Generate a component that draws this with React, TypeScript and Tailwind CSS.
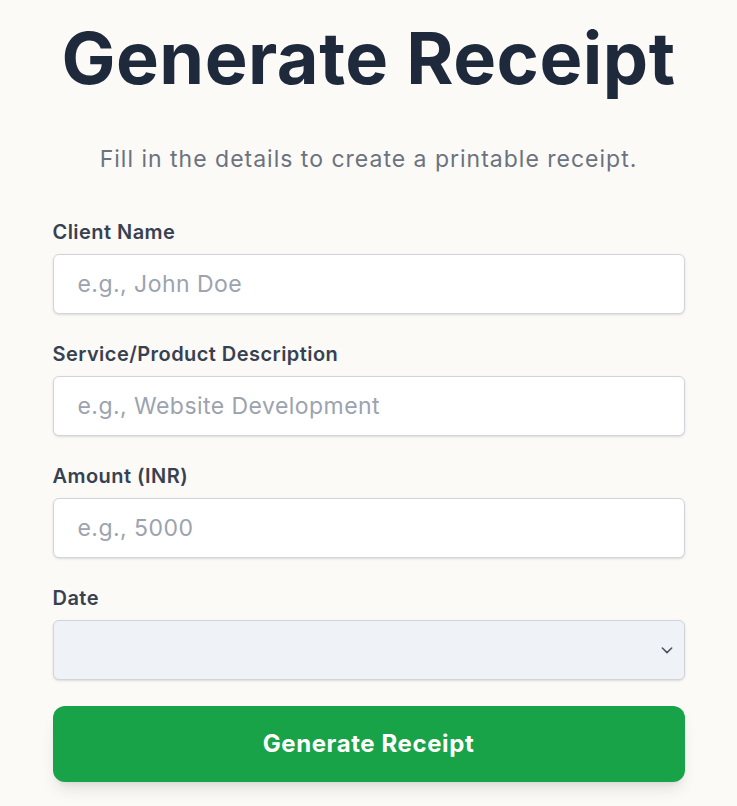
export default function App() {
  const fields = [
    { label: "Client Name", placeholder: "e.g., John Doe" },
    { label: "Service/Product Description", placeholder: "e.g., Website Development" },
    { label: "Amount (INR)", placeholder: "e.g., 5000" },
  ];

  return (
    <div className="min-h-[806px] w-full bg-[#fcfaf7] font-['Inter',sans-serif]">
      <div className="mx-auto w-[632px] pt-[14px]">
        <h1 className="text-center text-[72px] font-bold leading-[88px] tracking-[0.5px] text-[#1e293b]">
          Generate Receipt
        </h1>
        <p className="mt-[42px] text-center text-[23px] leading-[30px] tracking-[1px] text-[#6b7280]">
          Fill in the details to create a printable receipt.
        </p>

        <form className="mt-[46px] flex flex-col gap-[28px]">
          {fields.map((f) => (
            <div key={f.label}>
              <label className="mb-[10px] block text-[20px] font-semibold leading-6 tracking-[0.45px] text-[#374151]">
                {f.label}
              </label>
              <input
                type="text"
                placeholder={f.placeholder}
                className="h-[60px] w-full rounded-md border border-[#d1d5db] bg-white px-6 text-[23px] tracking-[0.45px] text-[#111827] shadow-sm outline-none placeholder:text-[#9ca3af]"
              />
            </div>
          ))}

          <div>
            <label className="mb-[10px] block text-[20px] font-semibold leading-6 tracking-[0.45px] text-[#374151]">
              Date
            </label>
            <div className="flex h-[60px] w-full items-center justify-end rounded-md border border-[#d1d5db] bg-[#eff3f8] pr-[9px] shadow-sm">
              <svg width="16" height="16" viewBox="0 0 24 24" fill="none" stroke="#4b5563" strokeWidth="2.4" strokeLinecap="round" strokeLinejoin="round">
                <path d="M5 9l7 7 7-7" />
              </svg>
            </div>
          </div>

          <button
            type="button"
            className="-mt-[2px] h-[76px] w-full rounded-xl bg-[#18a349] text-[24px] font-bold tracking-[0.6px] text-white shadow-lg"
          >
            Generate Receipt
          </button>
        </form>
      </div>
    </div>
  );
}
